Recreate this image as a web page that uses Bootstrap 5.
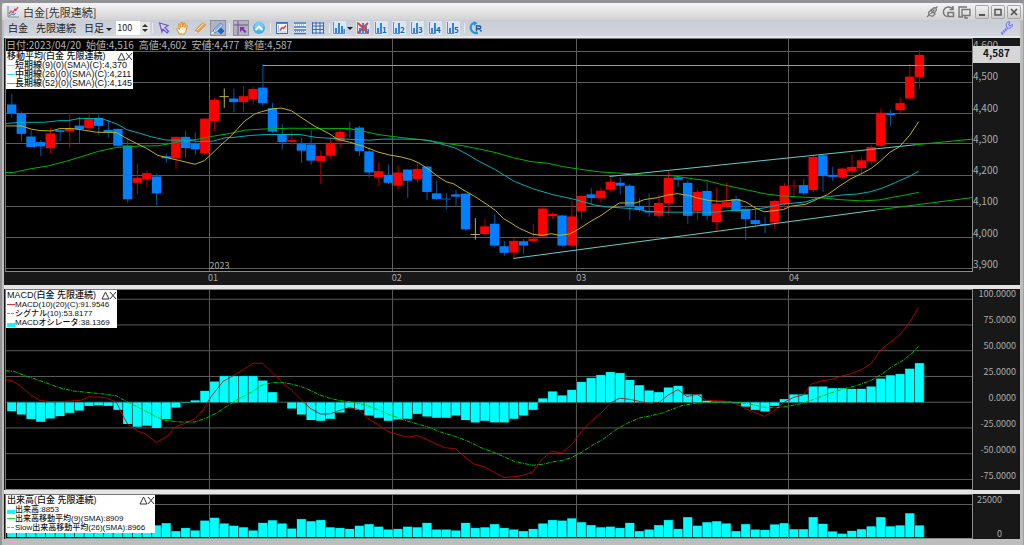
<!DOCTYPE html>
<html lang="ja">
<head>
<meta charset="utf-8">
<meta name="viewport" content="width=device-width, initial-scale=1">
<title>白金[先限連続]</title>
<link href="https://cdn.jsdelivr.net/npm/bootstrap@5.3.0/dist/css/bootstrap.min.css" rel="stylesheet">
<style>
  body { font-family: "Noto Sans CJK JP", sans-serif; font-size: 10px; line-height: 14px; color: #222; background: #8f8f93; }
  .app-window { background: #bdbdbd; border-top: 3px solid #929296; border-left: 2px solid #929296; border-right: 1px solid #a0a0a0; }
  .title-bar { height: 17px; background: linear-gradient(#f4f4f4, #e4e4e4 50%, #d2d2d2); padding: 0 2px 0 5px; border-radius: 4px 4px 0 0; }
  .title-bar h1 { font-size: 11px; line-height: 16px; font-weight: 400; color: #333; }
  .tool-bar { height: 18px; background: linear-gradient(#c8ccd4, #d2d5dc); border-bottom: 2px solid #e6e8ec; margin: 0 3px 0 2px; padding-left: 4px; }
  .tool-bar button, .title-bar button { border: 0; background: none; padding: 0; color: #222; line-height: 14px; border-radius: 0; }
  .pick { margin-right: 8px; font-size: 10px; }
  .ico { width: 18px; height: 16px; display: flex; align-items: center; justify-content: center; }
  .ico svg { width: 14px; height: 14px; flex: none; }
  .ico.active svg { background: #aeb3bf; box-shadow: 0 0 0 1px #8d919b; }
  .ico.with-menu { width: 22px; justify-content: flex-start; gap: 1px; }
  .split { width: 1px; height: 10px; background: #e8eaee; margin: 0 2px; }
  .bars-input { width: 24px; height: 14px; border: 0; padding: 0 0 0 1px; font-size: 9px; line-height: 14px; color: #222; border-radius: 0; background: #fff; }
  .stepper { width: 10px; height: 13px; background: #e4e4e4; }
  .stepper button { height: 6px; line-height: 0; display: flex; justify-content: center; align-items: center; }
  .caret { width: 0; border: 3px solid transparent; border-top-color: #222; border-bottom: 0; display: inline-block; vertical-align: middle; }
  .win-tools { gap: 2px; }
  .win-btn { width: 14px; height: 14px; }
  .win-btn.framed { background: linear-gradient(#f6f6f6, #c8c8c8) !important; box-shadow: inset 0 0 0 1px #a4a4a4; border-radius: 2px !important; }
  .win-btn:not(.framed) + .framed { margin-left: 2px; }
  .win-btn svg { width: 14px; height: 14px; display: block; }
  .workspace { margin: 0 3px 6px 2px; gap: 4px; background: #e4e4e4; min-height: 0; }
  .pane { min-height: 0; background: #181818; }
  .pane-price { flex: 247 1 0; } .pane-macd { flex: 201 1 0; } .pane-volume { flex: 45 1 0; }
  .plot { background: #000; min-height: 0; min-width: 0; border: 1px solid #8c8c8c; border-top-color: #777; border-left-color: #777; margin-left: 1px; }
  .plot > svg { position: absolute; inset: 0; width: 100%; height: 100%; }
  .scale { width: 47px; color: #aaa; min-height: 0; padding: 0 0 16px; }
  .scale div { display: flex; align-items: flex-end; flex: 1 1 0; min-height: 0; line-height: 11px; }
  .scale .top-value { flex: 0 0 12px; }
  .scale-right { padding-bottom: 9px; }
  .scale-right div { justify-content: flex-end; padding-right: 4px; font-size: 9px; }
  .scale-right .top-value { flex-basis: 10px; line-height: 10px; }
  .scale-volume { padding-bottom: 0; }
  .scale-volume div { flex: none; padding-right: 18px; }
  .timeline { height: 13px; color: #aaa; line-height: 11px; font-size: 9px; background: #181818; }
  .quote { color: #b4b4b4; line-height: 12px; gap: 5px; left: 0; top: 0; }
  .legend-box { left: 0; top: 0; background: #fff; color: #111; font-family: "Liberation Sans", "Noto Sans CJK JP", sans-serif; font-size: 9px; line-height: 9px; font-weight: 500; padding: 1px 0 1px 1px; }
  .legend-box.below-quote { top: 12px; }
  .legend-box .key { width: 8px; flex: none; }
  .legend-row { height: 9px; }
  .l-price { width: 127px; } .l-macd { width: 111px; } .l-volume { width: 149px; }
  .l-macd .legend-row, .l-volume .legend-row { font-size: 8px; }
  .legend-box .line-key { height: 1px; } .legend-box .area-key { height: 4px; align-self: flex-end; }
  .legend-box svg { width: 16px; height: 9px; }
  .last-price { right: 0; top: 8px; width: 47px; height: 17px; background: #d6d6d6; color: #111; font-weight: 700; line-height: 14px; text-align: center; }
  .year-tag { bottom: 0; color: #aaa; font-size: 9px; line-height: 10px; }
  .grid-line { stroke: #5c5c5c; stroke-width: 1; shape-rendering: crispEdges; }
  .curve { fill: none; stroke-width: 1; }
  .level { shape-rendering: crispEdges; }
  .grid-line, .curve { vector-effect: non-scaling-stroke; }
</style>
</head>
<body class="vh-100 overflow-hidden">
<svg class="d-none" aria-hidden="true">
  <symbol id="bars" viewBox="0 0 14 14"><rect width="14" height="14" fill="#dce6f2"/><path d="M1.500 1v11.500H13" fill="none" stroke="#7d8794"/><path d="M3 12V7h2v5zM6 12V2h2v10zM9 12V5h2v7zM11.500 12V8H13v4z" fill="#2f86dd"/></symbol>
</svg>
<main class="app-window vh-100 d-flex flex-column">
  <header class="title-bar d-flex align-items-center flex-shrink-0">
    <svg width="12" height="12" viewBox="0 0 12 12" class="me-1" aria-hidden="true"><rect width="12" height="12" fill="#dde2ec"/><path d="M1 0v11h11" fill="none" stroke="#7584a0"/><path d="M2 8l2-3 2 2 2-4 1 1 2-3" fill="none" stroke="#d84a4a" stroke-width="1.300"/><path d="M2 10l3-2 2 1 2-2" fill="none" stroke="#5574c8"/></svg>
    <h1 class="m-0 flex-grow-1">白金[先限連続]</h1>
    <div class="win-tools d-flex align-items-center flex-shrink-0">
      <button class="win-btn" aria-label="連動"><svg viewBox="0 0 14 14" fill="none" stroke="#777" stroke-width="1.300"><path d="M2 12l2-2M4.500 10c-1.500-1-1-2.500 0-3.500l1.500-1.500 4 4-1.500 1.500c-1 1-3 1-4-.5zM6.500 5L8 3.500c1-1 2.500-1 3 0 .8 1 .5 2-.5 3L9 8M5.500 9l4-4.500M11 3l1.500-1.500"/></svg></button>
      <button class="win-btn" aria-label="再読込"><svg viewBox="0 0 14 14" fill="none" stroke="#777" stroke-width="1.500"><path d="M11.500 3.500C9 1 4.500 1.500 3 4.500S3 11 6 11.500M12 1v3.500H8.500M7 7.500h5.500v4H7z"/></svg></button>
      <button class="win-btn" aria-label="複製"><svg viewBox="0 0 14 14" fill="none" stroke="#777" stroke-width="1.400"><path d="M10 2H2v10h4M5 4.500h8v6H5zM8 11v2h3"/></svg></button>
      <button class="win-btn framed" aria-label="最小化"><svg viewBox="0 0 14 14"><path d="M4 10h6" stroke="#555" stroke-width="2"/></svg></button>
      <button class="win-btn framed" aria-label="最大化"><svg viewBox="0 0 14 14"><path d="M4 4.500h6v5.500H4z" fill="none" stroke="#555" stroke-width="1.500"/></svg></button>
      <button class="win-btn framed" aria-label="閉じる"><svg viewBox="0 0 14 14"><path d="M4 4l6 6M10 4l-6 6" stroke="#555" stroke-width="1.700"/></svg></button>
    </div>
  </header>

  <nav class="tool-bar d-flex align-items-center flex-shrink-0" aria-label="チャート操作">
    <button class="pick">白金</button>
    <button class="pick">先限連続</button>
    <button class="me-1">日足 <span class="caret"></span></button>
    <input class="bars-input" type="text" value="100" aria-label="本数">
    <div class="stepper d-flex flex-column">
      <button aria-label="増やす"><svg width="6" height="4"><path d="M0 4l3-3 3 3z" fill="#333"/></svg></button>
      <button aria-label="減らす"><svg width="6" height="4"><path d="M0 0l3 3 3-3z" fill="#333"/></svg></button>
    </div>
    <span class="split"></span>
    <button class="ico" aria-label="選択"><svg viewBox="0 0 14 14"><path d="M2.500 2l8.500 2.500-3 2 3.500 4-1.500 1.500-4-4-1 3z" fill="#d9d2ff" stroke="#6a54c8" stroke-width="1.200"/></svg></button>
    <button class="ico" aria-label="移動"><svg viewBox="0 0 14 14"><path d="M4.500 13L1.500 8l1-1 2 1.500L3.500 3h1.300l1 3.500L6 1.500h1.400L7.800 6l1-4h1.200l-.2 4.500 1.500-2.500 1 .5L11 10l-1.500 3z" fill="#fff0d8" stroke="#df8c25"/></svg></button>
    <button class="ico" aria-label="描画"><svg viewBox="0 0 14 14"><path d="M2 12l1-3.500L10 1.500 12.500 4 5.500 11z" fill="#f7a53a" stroke="#d9822a" stroke-width=".800"/><path d="M4 9l6.500-6.500" stroke="#ffe0a8"/><path d="M1 13l1.700-3 1.800 1.500z" fill="#f3efe8"/></svg></button>
    <button class="ico active" aria-label="連続描画"><svg viewBox="0 0 14 14"><path d="M1.500 11.500L3 8.500 9.500 2l2.500 2.500-6.500 6.500z" fill="#e8f1ff" stroke="#3a78d8"/><path d="M4 9.500L10 3.500" stroke="#6aa4ee" stroke-width="1.400"/><path d="M0 13l1.500-2.500L3.500 12z" fill="#fff"/><path d="M10 6.500l3.500 3.500-3.500 3.500L6.500 10z" fill="#2463b8"/></svg></button>
    <span class="split"></span>
    <button class="ico active" aria-label="十字線"><svg viewBox="0 0 14 14"><path d="M4 0v14M0 4h14" stroke="#7c4a9a"/><path d="M6 6h5L9.500 7.500 12.500 10.500 11 12 8 9l-2 2z" fill="#8b2fa8"/></svg></button>
    <button class="ico" aria-label="先頭へ"><svg viewBox="0 0 14 14"><circle cx="7" cy="7" r="6" fill="#4cb1dd"/><circle cx="7" cy="5" r="4.500" fill="#78cbea"/><path d="M3.500 9L7 5.500 10.500 9" fill="none" stroke="#fff" stroke-width="1.800"/></svg></button>
    <span class="split"></span>
    <button class="ico" aria-label="チャート設定"><svg viewBox="0 0 14 14"><rect x="1.500" y="1.500" width="11" height="11" fill="#f3f7fc" stroke="#3a72b8"/><path d="M1 2.500h12" stroke="#4b86cc"/><path d="M5 9.500l2-3 1.500 1 2.500-3" stroke="#e04848" stroke-width="1.600" fill="none"/><path d="M3.500 4v7M4.500 11h7" stroke="#a7bedb"/></svg></button>
    <button class="ico" aria-label="一覧"><svg viewBox="0 0 14 14"><rect x="1" y="1" width="12" height="12" fill="#e8f0f8"/><path d="M1 2h12M1 6h12M1 9h12M1 12.500h12" stroke="#3f78b0" stroke-width="1.300"/><path d="M2 4h10M2 10.500h10" stroke="#65a0c0" stroke-dasharray="1 1"/></svg></button>
    <button class="ico" aria-label="格子"><svg viewBox="0 0 14 14"><rect x="1" y="1" width="12" height="12" fill="#dce6f4"/><path d="M1 2h12M1 5h12M1 8.500h12M1 12h12M1.500 1v12M5 1v12M9 1v12M12.500 1v12" stroke="#3b67ac"/></svg></button>
    <span class="split"></span>
    <button class="ico with-menu" aria-label="指標"><svg><use href="#bars"/></svg><span class="caret"></span></button>
    <button class="ico" aria-label="指標削除"><svg viewBox="0 0 14 14"><use href="#bars"/><path d="M2 2l10 10M12 2L2 12" stroke="#e03c3c" stroke-width="1.800"/></svg></button>
    <span class="d-flex" id="presets"></span>
    <span class="split"></span>
    <button class="ico" aria-label="更新"><svg viewBox="0 0 14 14"><path d="M6 2C2.500 2 1.300 5 1.700 7.500S5 13 9 12" fill="none" stroke="#2495d8" stroke-width="2.200"/><path d="M4.500 0l4 2-3.500 3z" fill="#2495d8"/><path d="M7.500 10.500V5h2.800c2 0 2 2.700 0 2.700H8M10 7.500l2.500 3" fill="none" stroke="#23599e" stroke-width="1.400"/></svg></button>
    <button class="ico ms-auto me-1" aria-label="設定"><svg viewBox="0 0 14 14"><path d="M1.500 13l6-6" stroke="#7a7af0" stroke-width="2.500" stroke-dasharray="2 .5"/><path d="M12.500 3.500L10 5 8.500 4 10 1c-3-.5-4.500 2-3.500 5 2 2.500 6 1 6-2.500z" fill="#c8c8ff" stroke="#6a6af0"/></svg></button>
  </nav>

  <div class="workspace d-flex flex-column flex-grow-1">
    <section class="pane pane-price d-flex position-relative" aria-label="価格">
      <div class="d-flex flex-column flex-grow-1">
        <div class="plot position-relative flex-grow-1 overflow-hidden">
          <svg id="price" viewBox="18 114 2901 702" preserveAspectRatio="none"></svg>
          <div class="quote position-absolute d-flex text-nowrap"><span>日付:2023/04/20</span><span>始値:4,516</span><span>高値:4,602</span><span>安値:4,477</span><span>終値:4,587</span></div>
          <div class="legend-box below-quote l-price position-absolute text-nowrap" data-title="移動平均(白金 先限連続)" data-rows='[["line","#e8e000","短期線(9)(0)(SMA)(C):4,370"],["line","#2fe0e8","中期線(26)(0)(SMA)(C):4,211"],["line","#20d820","長期線(52)(0)(SMA)(C):4,145"]]'></div>
          <span class="year-tag position-absolute" id="year">2023</span>
        </div>
        <div class="timeline d-flex" id="timeline"></div>
      </div>
      <div class="scale d-flex flex-column">
        <div class="top-value">4,600</div><div>4,500</div><div>4,400</div><div>4,300</div><div>4,200</div><div>4,100</div><div>4,000</div><div>3,900</div>
      </div>
      <div class="last-price position-absolute">4,587</div>
    </section>

    <section class="pane pane-macd d-flex" aria-label="MACD">
      <div class="plot position-relative flex-grow-1 overflow-hidden">
        <svg id="macd" viewBox="18 867 2901 603" preserveAspectRatio="none"></svg>
        <div class="legend-box l-macd position-absolute text-nowrap" data-title="MACD(白金 先限連続)" data-rows='[["line","#e03030","MACD(10)(20)(C):91.9546"],["dash","#20d820","シグナル(10):53.8177"],["area","#00ffff","MACDオシレータ:38.1369"]]'></div>
      </div>
      <div class="scale scale-right d-flex flex-column">
        <div class="top-value">100.0000</div><div>75.0000</div><div>50.0000</div><div>25.0000</div><div>0.0000</div><div>-25.0000</div><div>-50.0000</div><div>-75.0000</div>
      </div>
    </section>

    <section class="pane pane-volume d-flex" aria-label="出来高">
      <div class="plot position-relative flex-grow-1 overflow-hidden">
        <svg id="volume" viewBox="18 1482 2901 135" preserveAspectRatio="none"></svg>
        <div class="legend-box l-volume position-absolute text-nowrap" data-title="出来高(白金 先限連続)" data-rows='[["area","#00ffff","出来高:8853"],["line","#20d820","出来高移動平均(9)(SMA):8909"],["dash","#f060f0","Slow出来高移動平均(26)(SMA):8966"]]'></div>
      </div>
      <div class="scale scale-right scale-volume d-flex flex-column justify-content-between">
        <div>25000</div><div>0</div>
      </div>
    </section>
  </div>
</main>
<script src="https://cdn.jsdelivr.net/npm/bootstrap@5.3.0/dist/js/bootstrap.bundle.min.js"></script>
<script>
const LEFT = 18, RIGHT = 2919, STEP = 29, FIRST = 35;
const months = [[629, '01'], [1179, '02'], [1731, '03'], [2368, '04']];
// colour (r rise, b fall, d doji), high, body top, body bottom, low
const candles = `b280,312,338,352 b333,339,401,423 b390,409,441,441 b420,426,439,468 r382,400,444,460 b388,390,395,423 r338,385,393,442 b350,376,387,428 r336,354,384,390 b343,353,377,404
b360,389,397,411 b385,386,437,440 b416,436,599,609 r491,534,549,584 r511,520,539,564 b521,530,581,617 b460,469,475,489 r410,410,475,508 b393,410,444,473 b397,431,448,464
r353,355,459,464 r292,298,362,394 d264,287,290,322 b264,294,305,336 r256,287,305,334 r258,265,296,313 b190,261,308,318 b307,323,394,398 b372,403,426,449 r394,420,425,435
b413,432,452,489 b388,433,482,494 r451,468,483,553 r412,432,467,476 r387,395,422,444 b364,387,390,413 b377,382,453,468 b442,454,518,533 r487,514,532,557 b494,525,549,553
r497,518,558,572 b508,509,543,595 r490,507,538,548 b498,500,577,602 b543,581,598,600 b581,597,600,629 b570,584,591,619 b581,582,690,694 d656,704,707,721 r659,681,704,710
b645,673,739,743 b725,741,761,770 r716,725,760,778 b720,726,739,764 r673,718,725,729 r620,627,711,717 r639,643,650,659 b646,648,739,743 r603,651,739,742 r586,589,635,659
b565,584,595,615 r563,573,596,609 r533,546,570,578 b532,549,558,584 b553,558,620,661 b596,620,631,637 b581,634,639,652 r585,610,649,656 r513,534,611,647 b527,533,540,562
b543,549,649,673 r568,577,635,663 b548,574,649,663 r562,612,668,695 r548,608,621,626 b587,598,635,636 b620,628,659,722 b626,662,674,678 b652,674,678,702 r600,604,669,687
r549,558,614,628 r539,557,560,595 b538,556,581,586 r463,471,571,578 b463,466,529,577 b501,525,531,543 r503,506,533,537 r464,501,514,525 r471,481,505,525 r436,441,484,495
r324,337,437,440 b329,340,344,378 r291,308,329,339 r190,228,294,299 r147,162,229,265`.split(/\s+/);
// the last day of the list has no separate session marker
const smaShort = '18,377 64,377 95,387 120,391 155,392 180,385 215,385 240,388 290,396 350,397 375,412 410,430 440,445 474,466 510,475 540,482 560,487 586,493 614,482 632,465 658,440 696,405 735,362 765,341 785,334 820,325 845,323 875,331 910,355 945,378 988,400 1015,418 1050,426 1095,440 1135,456 1170,465 1205,471 1235,479 1258,489 1290,510 1315,530 1340,546 1362,552 1390,570 1425,590 1460,613 1488,633 1513,658 1535,671 1560,687 1600,705 1630,708 1655,703 1680,708 1710,704 1730,694 1775,665 1805,648 1833,628 1860,610 1910,610 1935,600 1975,594 2005,586 2035,582 2070,588 2095,595 2130,603 2165,605 2215,600 2240,607 2268,625 2295,637 2353,630 2375,620 2420,614 2455,598 2485,585 2520,560 2555,537 2590,520 2617,505 2642,485 2672,457 2701,440 2732,405 2759,364';
const smaMid = '18,370 60,366 130,366 180,361 205,361 240,354 305,355 335,365 355,373 380,388 415,398 455,410 500,420 560,420 600,424 640,423 680,412 700,412 750,406 800,403 900,403 950,412 1040,417 1110,420 1150,417 1210,417 1265,418 1290,422 1330,433 1365,443 1400,461 1440,485 1485,508 1520,530 1545,545 1600,567 1660,585 1720,598 1785,616 1820,622 1880,626 1920,630 1945,636 2000,638 2150,638 2190,633 2240,633 2295,625 2350,614 2390,610 2420,607 2455,595 2495,590 2540,585 2575,583 2615,576 2650,565 2690,548 2730,530 2759,514';
const smaLong = '18,518 40,518 90,507 145,498 195,485 245,470 295,454 350,442 420,438 475,437 515,430 560,420 590,418 640,408 690,400 735,390 800,386 870,384 1050,385 1090,393 1135,403 1180,409 1230,415 1285,421 1340,430 1390,437 1440,447 1490,458 1540,473 1595,485 1645,490 1690,500 1740,508 1800,516 1880,521 1930,526 2020,528 2080,537 2120,542 2170,555 2250,572 2300,583 2350,589 2420,593 2470,595 2520,600 2590,604 2640,601 2680,593 2720,586 2759,578';
const macdLine = '18,1140 35,1141 62,1158 92,1185 120,1202 150,1205 180,1205 240,1202 265,1191 295,1191 320,1194 350,1208 365,1240 383,1273 415,1295 437,1303 470,1329 500,1312 525,1283 555,1271 586,1257 610,1230 634,1190 670,1144 700,1127 735,1105 760,1089 788,1089 818,1118 848,1148 875,1170 905,1200 932,1226 963,1243 992,1242 1020,1232 1050,1223 1078,1230 1108,1258 1137,1276 1165,1296 1195,1305 1224,1313 1253,1308 1282,1320 1311,1334 1338,1345 1368,1348 1398,1375 1425,1395 1453,1402 1485,1420 1514,1435 1543,1433 1570,1429 1600,1418 1628,1380 1657,1355 1685,1361 1717,1336 1746,1295 1775,1265 1805,1240 1833,1210 1860,1195 1890,1198 1918,1204 1950,1212 1980,1207 2007,1185 2036,1169 2063,1190 2093,1183 2120,1201 2180,1204 2210,1212 2240,1227 2268,1238 2295,1250 2322,1235 2355,1207 2384,1192 2412,1185 2437,1152 2467,1142 2497,1138 2527,1128 2557,1120 2584,1110 2616,1090 2645,1048 2674,1025 2702,1003 2732,965 2758,920';
const signalLine = '18,1112 40,1113 85,1130 130,1145 175,1162 220,1173 260,1177 310,1182 350,1188 375,1202 410,1220 445,1238 470,1252 495,1262 540,1267 585,1267 620,1255 650,1240 680,1220 720,1195 755,1177 785,1156 815,1148 845,1147 875,1152 905,1160 935,1172 960,1185 990,1195 1020,1202 1060,1207 1100,1216 1135,1230 1170,1245 1210,1260 1250,1272 1285,1282 1325,1298 1365,1310 1405,1325 1445,1345 1485,1360 1520,1375 1545,1387 1600,1398 1630,1395 1660,1388 1690,1383 1715,1375 1740,1363 1775,1340 1810,1320 1850,1290 1885,1270 1920,1255 1955,1248 1990,1239 2020,1228 2045,1218 2090,1210 2140,1207 2200,1207 2250,1212 2292,1222 2327,1224 2362,1220 2412,1210 2452,1195 2492,1180 2532,1167 2572,1157 2617,1140 2647,1123 2677,1100 2712,1080 2737,1060 2758,1038';
const oscillator = [-27,-37,-51,-59,-49,-42,-32,-25,-11,-9,-11,-23,-66,-74,-71,-78,-51,-16,-2,6,35,63,80,80,80,80,66,31,0,-19,-37,-54,-56,-50,-31,-18,-23,-40,-47,-56,-52,-50,-35,-43,-47,-47,-40,-54,-61,-56,-61,-61,-50,-40,-23,12,33,21,38,62,74,83,92,89,68,52,36,31,45,50,24,24,5,2,2,-3,-13,-23,-28,-11,10,24,24,48,48,43,43,41,41,48,72,82,86,102,119];
const volumes = [30,34,28,40,36,30,26,38,32,28,34,30,42,38,34,37,44,19,29,21,52,61,43,36,31,21,45,53,43,27,57,50,54,31,29,26,36,41,33,24,26,33,31,45,24,24,21,45,29,31,41,29,24,19,26,43,54,52,59,47,38,31,33,29,45,19,24,38,54,26,63,36,47,50,43,19,41,24,23,40,44,25,25,63,42,18,11,20,25,34,63,34,37,75,37];

const at = i => FIRST + STEP * i;
const rect = (x, y, w, h, fill) => `<rect x="${x}" y="${y}" width="${w}" height="${h}" fill="${fill}"/>`;
const curve = (points, color, extra = '') => `<polyline class="curve" points="${points}" stroke="${color}" ${extra}/>`;
const level = (x1, x2, y, color) => `<line class="curve level" x1="${x1}" x2="${x2}" y1="${y}" y2="${y}" stroke="${color}"/>`;
const grid = (rows, top, bottom) =>
  rows.map(y => `<line class="grid-line" x1="${LEFT}" x2="${RIGHT}" y1="${y}" y2="${y}"/>`).join('') +
  months.map(([x]) => `<line class="grid-line" x1="${x}" x2="${x}" y1="${top}" y2="${bottom}"/>`).join('');
const column = (i, y, h) => rect(at(i) - 14, y, 29, h, '#007878') + rect(at(i) - 13, y + 1, 26, Math.max(h - 1, 1), '#00ffff');

const palette = { r: ['#ff0000', '#b00000'], b: ['#0080ff', '#0858a8'], d: ['#d8d070', '#b8b060'] };
document.getElementById('price').innerHTML =
  grid([151, 245, 340, 431, 526, 620, 715, 809], 114, 816) +
  candles.map((c, i) => {
    const [body, wick] = palette[c[0]];
    const [high, top, bottom, low] = c.slice(1).split(',').map(Number);
    return rect(at(i) - 1, high, 3, low - high, wick) + rect(at(i) - 14, top, 28, Math.max(bottom - top, 3), bottom - top < 4 ? wick : body);
  }).join('') +
  curve(smaLong, '#00b400') + curve(smaMid, '#00b0b8') + curve(smaShort, '#c0b410') +
  level(789, 2884, 194, '#48bcbc') + level(2884, 2919, 194, '#00b800') +
  curve('1830,530 2750,434', '#68ccc8') + curve('2750,434 2919,417', '#00b800') +
  curve('1542,778 2628,632', '#68ccc8') + curve('2628,632 2919,594', '#00b800');
document.getElementById('macd').innerHTML =
  grid([895, 973, 1051, 1129, 1207, 1285, 1363, 1441], 867, 1470) +
  oscillator.map((v, i) => v ? column(i, v > 0 ? 1207 - v : 1207, Math.abs(v)) : '').join('') +
  curve(macdLine, '#d00000', 'stroke-opacity=".85"') + curve(signalLine, '#00c000', 'stroke-dasharray="4 1 1 1"');
document.getElementById('volume').innerHTML =
  grid([1511], 1482, 1617) + volumes.map((v, i) => column(i, 1614 - v, v)).join('');

const share = (a, b) => (b - a) / (RIGHT - LEFT) * 100;
document.getElementById('year').style.left = share(LEFT, months[0][0]) + '%';
document.getElementById('timeline').innerHTML = `<span style="width:${share(LEFT, months[0][0])}%"></span>` +
  months.map(([x, name], k) => `<span style="width:${share(x, k < 3 ? months[k + 1][0] : RIGHT)}%">${name}</span>`).join('');

document.querySelectorAll('.legend-box').forEach(box => {
  const keys = {
    line: c => `<span class="key line-key" style="background:${c}"></span>`,
    dash: c => `<span class="key line-key" style="background:repeating-linear-gradient(90deg,${c} 0 3px,#fff 3px 4px)"></span>`,
    area: c => `<span class="key area-key" style="background:${c}"></span>`
  };
  box.innerHTML = `<div class="d-flex justify-content-between"><span>${box.dataset.title}</span><svg viewBox="0 0 16 9" fill="none" stroke="#333"><path d="M4.500 1L8 8H1zM9 1l6 7M15 1L9 8"/></svg></div>` +
    JSON.parse(box.dataset.rows).map(([kind, color, text]) => `<div class="legend-row d-flex align-items-center">${keys[kind](color)}<span>${text}</span></div>`).join('');
});
document.getElementById('presets').innerHTML = [1, 2, 3, 4, 5].map(n =>
  `<button class="ico" aria-label="指標セット${n}"><svg viewBox="0 0 14 14"><use href="#bars"/><rect x="8" y="5" width="6" height="8" fill="#dce6f2"/><text x="8" y="12" font-size="8" font-weight="700" fill="#1f5fa8">${n}</text></svg></button>`).join('');
</script>
</body>
</html>
